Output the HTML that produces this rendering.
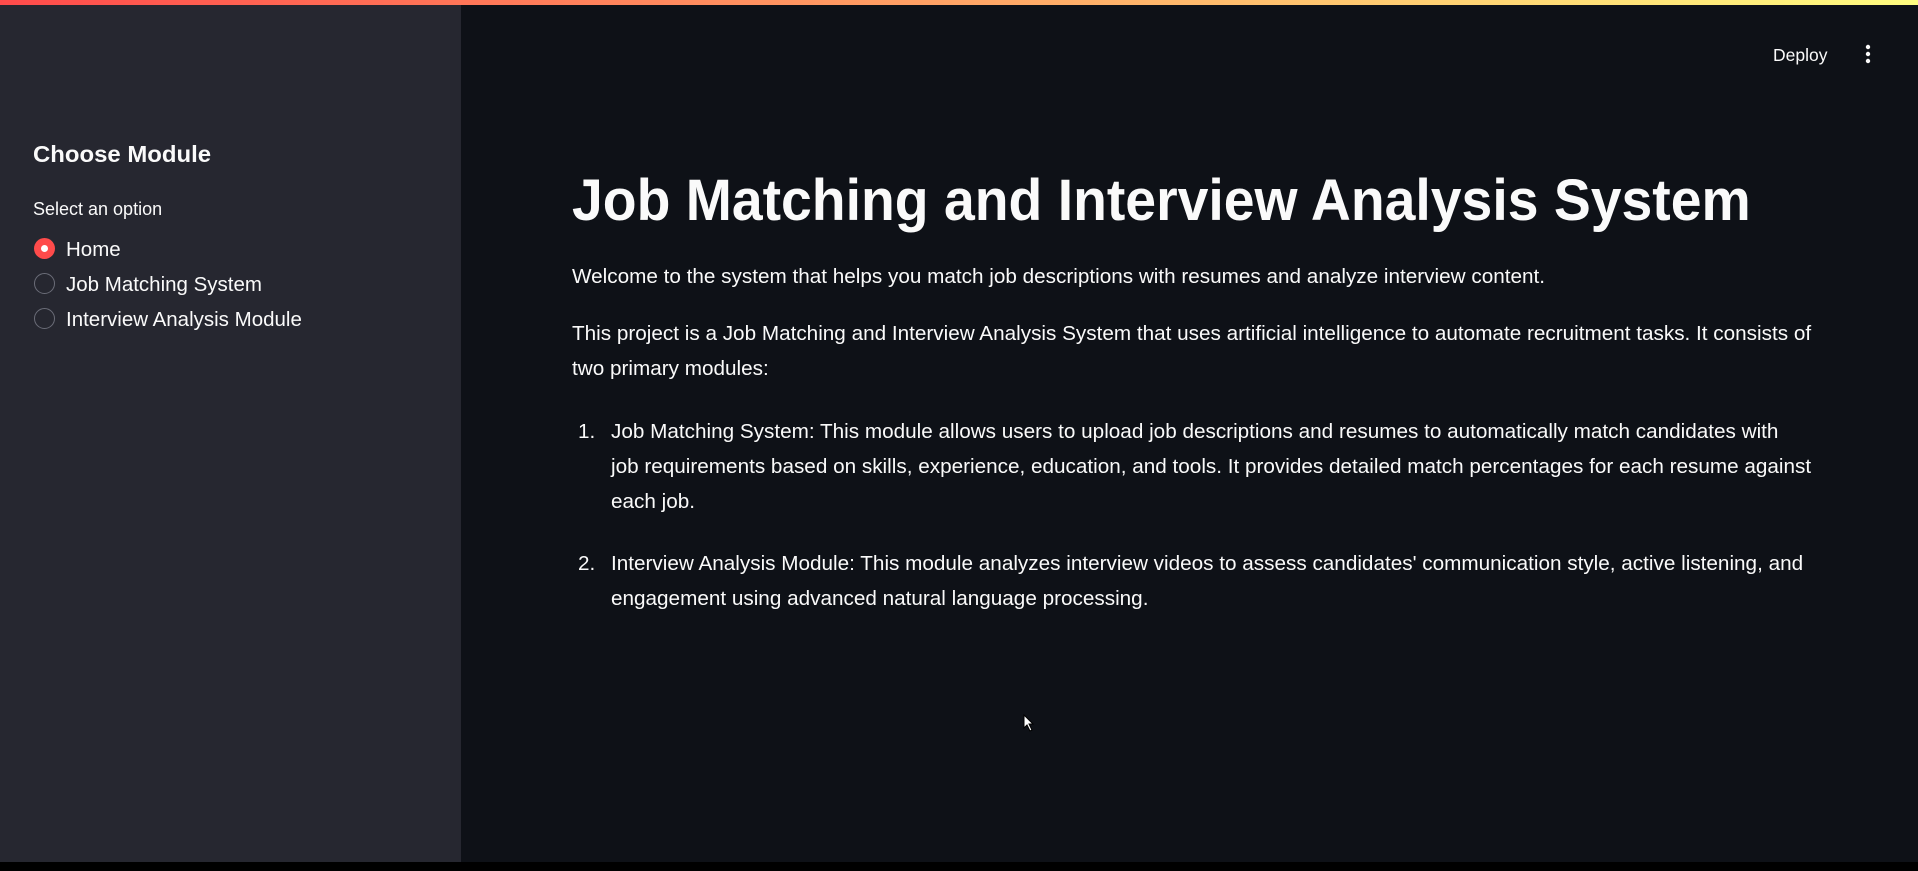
<!DOCTYPE html>
<html><head><meta charset="utf-8"><style>
*{margin:0;padding:0;box-sizing:border-box}
body{width:1918px;height:871px;background:#0e1117;font-family:"Liberation Sans",sans-serif;color:#fafafa;position:relative;overflow:hidden}
.bar{position:absolute;left:0;top:0;width:1918px;height:5px;background:linear-gradient(90deg,#ff4b4b,#fffd80)}
.side{position:absolute;left:0;top:5px;width:461px;height:857px;background:#262730}
.bottom{position:absolute;left:0;top:862px;width:1918px;height:9px;background:#000}
.t{position:absolute;white-space:nowrap}
.radio{position:absolute;left:34px;width:21px;height:21px;border-radius:50%;border:1px solid #6b6d78}
.radio.on{background:#ff4b4b;border:none}
.radio.on::after{content:"";position:absolute;left:7px;top:7px;width:7px;height:7px;border-radius:50%;background:#fff}
.p{font-size:20px;transform:scaleX(1.035);transform-origin:left}
.s{font-size:20.5px}
</style></head><body>
<div class="bar"></div>
<div class="side"></div>
<div class="t" style="left:33px;top:141px;font-size:23px;font-weight:bold;transform:scaleX(1.04);transform-origin:left">Choose Module</div>
<div class="t" style="left:33px;top:199px;font-size:18px">Select an option</div>
<div class="radio on" style="top:238px"></div>
<div class="t s" style="left:66px;top:238px">Home</div>
<div class="radio" style="top:273px"></div>
<div class="t s" style="left:66px;top:273px">Job Matching System</div>
<div class="radio" style="top:308px"></div>
<div class="t s" style="left:66px;top:308px">Interview Analysis Module</div>

<div class="t" style="left:1773px;top:45px;font-size:17.5px">Deploy</div>
<svg class="t" style="left:1860px;top:43px" width="16" height="22"><circle cx="8" cy="4" r="2.2" fill="#fafafa"/><circle cx="8" cy="11" r="2.2" fill="#fafafa"/><circle cx="8" cy="18" r="2.2" fill="#fafafa"/></svg>

<div class="t" style="left:572px;top:167px;font-size:58px;font-weight:bold;transform:scaleX(0.954);transform-origin:left">Job Matching and Interview Analysis System</div>
<div class="t p" style="left:572px;top:266px">Welcome to the system that helps you match job descriptions with resumes and analyze interview content.</div>
<div class="t p" style="left:572px;top:323px">This project is a Job Matching and Interview Analysis System that uses artificial intelligence to automate recruitment tasks. It consists of</div>
<div class="t p" style="left:572px;top:358px">two primary modules:</div>
<div class="t p" style="left:578px;top:421px">1.</div>
<div class="t p" style="left:611px;top:421px">Job Matching System: This module allows users to upload job descriptions and resumes to automatically match candidates with</div>
<div class="t p" style="left:611px;top:456px">job requirements based on skills, experience, education, and tools. It provides detailed match percentages for each resume against</div>
<div class="t p" style="left:611px;top:491px">each job.</div>
<div class="t p" style="left:578px;top:553px">2.</div>
<div class="t p" style="left:611px;top:553px">Interview Analysis Module: This module analyzes interview videos to assess candidates' communication style, active listening, and</div>
<div class="t p" style="left:611px;top:588px">engagement using advanced natural language processing.</div>
<svg class="t" style="left:1023px;top:714px" width="12" height="18"><path d="M1 1 L1 14 L4 11 L7 17 L9 16 L6 10 L10 10 Z" fill="#fff" stroke="#000" stroke-width="1"/></svg>
<div class="bottom"></div>
</body></html>
